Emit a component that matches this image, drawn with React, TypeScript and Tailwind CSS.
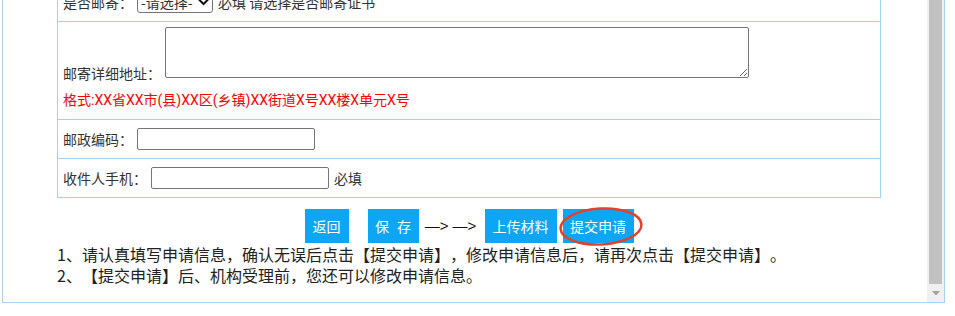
import React from "react";

export default function App() {
  return (
    <div className="w-[955px] h-[316px] bg-white overflow-hidden font-['Noto_Sans_CJK_SC',sans-serif] text-[#222] [text-spacing-trim:space-all]">
      <div className="ml-[2px] w-[943px] h-[303px] border-l border-r border-b border-[#a9d3f1] flex overflow-hidden">
        <div className="w-[924px] h-full overflow-hidden">
          <div className="-mt-[18px] ml-[54px] w-[824px]">
            {/* table */}
            <div className="border border-[#a6d2f0] text-[14px] text-[#333]">
              {/* row 1 */}
              <div className="h-[38px] flex items-center pl-[5px]">
                <span className="leading-[14px]">是否邮寄：</span>
                <div className="ml-[4px] w-[76px] h-[22px] border border-[#767676] rounded-[3px] flex items-center justify-between px-[3px] bg-white">
                  <span className="leading-[14px]">-请选择-</span>
                  <svg width="11" height="8" viewBox="0 0 11 8">
                    <path d="M1 1.5 L5.5 6 L10 1.5" fill="none" stroke="#111" strokeWidth="2" />
                  </svg>
                </div>
                <span className="ml-[5px] leading-[14px]">必填 请选择是否邮寄证书</span>
              </div>
              {/* row 2 */}
              <div className="h-[98px] border-t border-[#a6d2f0] pl-[5px] pt-[5px] flex flex-col">
                <div className="flex h-[53px]">
                  <span className="self-end leading-[14px]">邮寄详细地址：</span>
                  <textarea
                    readOnly
                    className="ml-[4px] w-[584px] h-[51px] self-start border border-[#767676] rounded-[2px] bg-white resize"
                  />
                </div>
                <div className="mt-[10px] leading-[20px] text-[#ff0000] font-['Roboto','Noto_Sans_CJK_SC',sans-serif]">
                  格式:XX省XX市(县)XX区(乡镇)XX街道X号XX楼X单元X号
                </div>
              </div>
              {/* row 3 */}
              <div className="h-[39px] border-t border-[#a6d2f0] flex items-center pl-[5px]">
                <span className="leading-[14px]">邮政编码：</span>
                <input
                  readOnly
                  className="ml-[4px] w-[178px] h-[22px] border border-[#767676] rounded-[2px] bg-white"
                />
              </div>
              {/* row 4 */}
              <div className="h-[39px] border-t border-[#a6d2f0] flex items-center pl-[5px]">
                <span className="leading-[14px]">收件人手机：</span>
                <input
                  readOnly
                  className="ml-[4px] w-[178px] h-[22px] border border-[#767676] rounded-[2px] bg-white"
                />
                <span className="ml-[5px] leading-[14px]">必填</span>
              </div>
            </div>

            {/* buttons */}
            <div className="mt-[11px] flex justify-center items-center text-[14px]">
              <button className="h-[34px] w-[44px] bg-[#0ca6f5] text-white leading-[34px]">返回</button>
              <button className="ml-[19px] h-[34px] w-[51px] bg-[#0ca6f5] text-white leading-[34px] flex items-center justify-center">
                <span>保</span>
                <span className="inline-block w-[8px]" />
                <span>存</span>
              </button>
              <span className="ml-[5px] w-[54px] text-center text-[#111] leading-[20px] whitespace-pre font-['Liberation_Sans',sans-serif] text-[15px]">—&gt; —&gt;</span>
              <button className="ml-[7px] h-[34px] w-[72px] bg-[#0ca6f5] text-white leading-[34px]">上传材料</button>
              <div className="ml-[6px] relative">
                <button className="h-[34px] w-[71px] bg-[#0ca6f5] text-white leading-[34px] block">提交申请</button>
                <svg
                  className="absolute left-[-5px] top-[-3px] pointer-events-none"
                  width="86"
                  height="41"
                  viewBox="0 0 86 41"
                >
                  <ellipse
                    cx="43"
                    cy="20.5"
                    rx="40.5"
                    ry="18"
                    fill="none"
                    stroke="#e3412b"
                    strokeWidth="2.5"
                    transform="rotate(-3 43 20.5)"
                  />
                </svg>
              </div>
            </div>

            {/* notes */}
            <div className="mt-[1px] text-[16px] leading-[21px] text-[#222] whitespace-nowrap">
              <div>1、请认真填写申请信息，确认无误后点击【提交申请】，修改申请信息后，请再次点击【提交申请】。</div>
              <div>2、【提交申请】后、机构受理前，您还可以修改申请信息。</div>
            </div>
          </div>
        </div>

        {/* scrollbar */}
        <div className="w-[17px] h-full bg-[#f0f0f0] flex flex-col">
          <div className="mx-[2px] h-[284px] bg-[#c1c1c1]" />
          <div className="flex-1 flex items-center justify-center">
            <svg width="8" height="5" viewBox="0 0 8 5">
              <path d="M0 0 L8 0 L4 4.5 Z" fill="#a3a3a3" />
            </svg>
          </div>
        </div>
      </div>
    </div>
  );
}
